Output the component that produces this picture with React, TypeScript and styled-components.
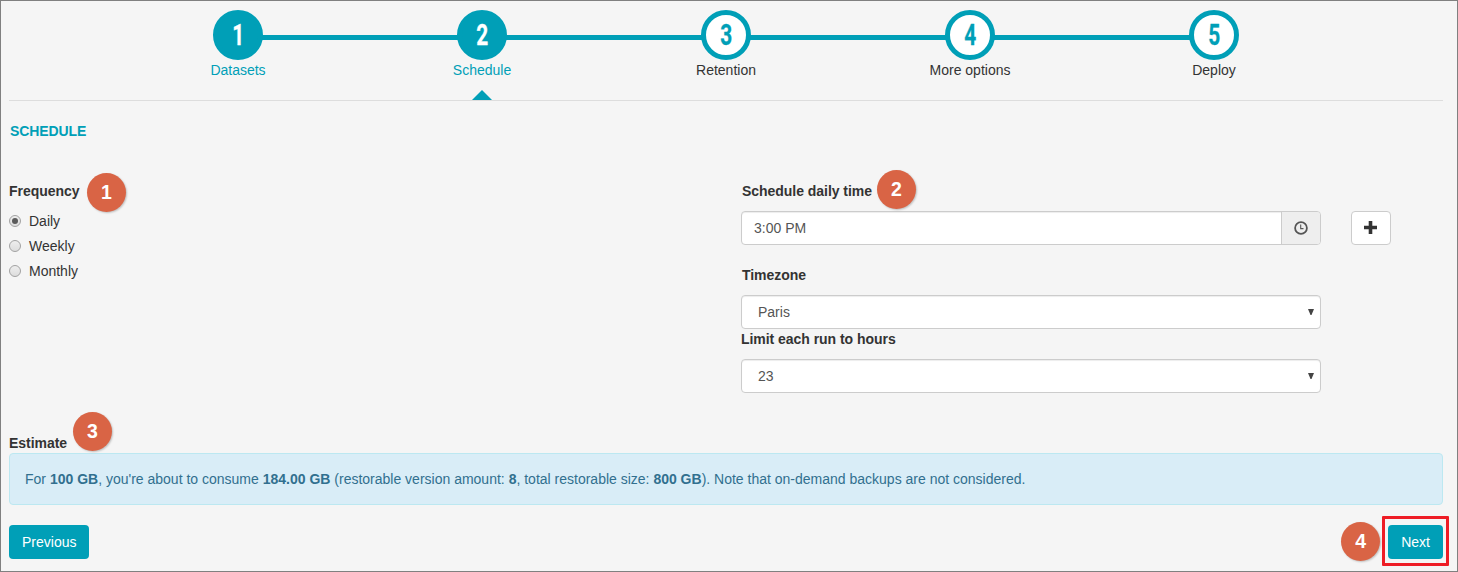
import React from 'react';
import styled, { createGlobalStyle } from 'styled-components';

const teal = '#009fb7';

const GlobalStyle = createGlobalStyle`
  *, *::before, *::after { box-sizing: border-box; }
  body {
    margin: 0;
    background: #f5f5f5;
    color: #333;
    font: 14px/20px "Liberation Sans", Arial, sans-serif;
  }
`;

const Page = styled.main`
  height: 572px;
  padding: 9px 14px 0 8px;
  border: 1px solid #808080;
  background: #f5f5f5;
  overflow: hidden;
`;

const Stepper = styled.ol`
  display: grid;
  grid-template-columns: repeat(5, 244px);
  height: 91px;
  margin: 0;
  padding: 0 0 0 107px;
  border-bottom: 1px solid #ddd;
  list-style: none;
`;

const Step = styled.li<{ $reached: boolean; $current: boolean }>`
  position: relative;
  display: flex;
  flex-direction: column;
  align-items: center;
  color: ${(p) => (p.$reached ? teal : '#333')};

  &:not(:last-child)::before {
    content: '';
    position: absolute;
    top: 25px;
    left: 50%;
    width: 100%;
    height: 5px;
    background: ${teal};
  }

  &::after {
    content: '';
    display: ${(p) => (p.$current ? 'block' : 'none')};
    margin-top: 10px;
    border: 10px solid transparent;
    border-top: 0;
    border-bottom-color: ${teal};
  }
`;

const StepCircle = styled.span<{ $reached: boolean }>`
  position: relative;
  z-index: 1;
  display: flex;
  flex: none;
  align-items: center;
  justify-content: center;
  width: 50px;
  height: 50px;
  border: 5px solid ${teal};
  border-radius: 50%;
  background: ${(p) => (p.$reached ? teal : '#fff')};
  color: ${(p) => (p.$reached ? '#fff' : teal)};
`;

const StepNumber = styled.span`
  font: bold 29px/40px Roboto, sans-serif;
  -webkit-text-stroke: 0.3px currentColor;
  transform: scaleX(0.72);
`;

const StepLabel = styled.span`
  position: relative;
  white-space: nowrap;
`;

const SectionTitle = styled.h1`
  margin: 20px 0 40px 1px;
  color: ${teal};
  font-size: 14px;
  line-height: 20px;
  letter-spacing: -0.1px;
`;

const Columns = styled.div`
  display: grid;
  grid-template-columns: 732px 650px;
  height: 252px;
`;

const Column = styled.section`
  display: flex;
  flex-direction: column;
`;

const FieldLabel = styled.div<{ $gapTop?: number; $gapBottom?: number; $indent?: number }>`
  position: relative;
  align-self: flex-start;
  margin-top: ${(p) => p.$gapTop ?? 0}px;
  margin-bottom: ${(p) => p.$gapBottom ?? 0}px;
  padding-left: ${(p) => p.$indent ?? 0}px;
  font-weight: bold;
  letter-spacing: -0.04px;
`;

const Marker = styled.span<{ $x: number; $y: number }>`
  position: absolute;
  left: ${(p) => p.$x}px;
  top: ${(p) => p.$y}px;
  width: 39px;
  height: 39px;
  border-radius: 50%;
  background: #d96445;
  box-shadow: 1px 1px 2px rgba(0, 0, 0, 0.22);
  color: #fff;
  font: bold 19.5px/38px "Liberation Sans", Arial, sans-serif;
  text-align: center;
`;

const RadioRow = styled.label`
  display: flex;
  align-items: center;
  gap: 8px;
  height: 20px;
  margin-bottom: 5px;
`;

const Radio = styled.input`
  appearance: none;
  display: grid;
  place-items: center;
  width: 12px;
  height: 12px;
  margin: 0;
  border: 1px solid #a2a2a2;
  border-radius: 50%;
  background: linear-gradient(#eee, #ddd);

  &:checked::after {
    content: '';
    width: 6px;
    height: 6px;
    border-radius: 50%;
    background: #5b5b5b;
  }
`;

const TimeRow = styled.div`
  display: flex;
  gap: 30px;
`;

const InputGroup = styled.div`
  display: flex;
  width: 580px;
  height: 34px;
  border: 1px solid #ccc;
  border-radius: 4px;
  background: #fff;
  box-shadow: inset 0 1px 1px rgba(0, 0, 0, 0.075);
  overflow: hidden;
`;

const TimeInput = styled.input`
  flex: 1;
  min-width: 0;
  padding: 0 12px;
  border: 0;
  background: transparent;
  color: #555;
  font: inherit;
`;

const Addon = styled.span`
  display: flex;
  align-items: center;
  justify-content: center;
  width: 39px;
  border-left: 1px solid #ccc;
  background: #eee;
`;

const AddButton = styled.button`
  display: flex;
  align-items: center;
  justify-content: center;
  width: 40px;
  height: 34px;
  padding: 0;
  border: 1px solid #ccc;
  border-radius: 4px;
  background: #fff;
`;

const SelectBox = styled.div`
  display: flex;
  align-items: center;
  justify-content: space-between;
  width: 580px;
  height: 34px;
  padding: 0 6px 0 16px;
  border: 1px solid #ccc;
  border-radius: 4px;
  background: #fff;
  box-shadow: inset 0 1px 1px rgba(0, 0, 0, 0.075);
  color: #555;
`;

const EstimateNote = styled.div`
  height: 52px;
  margin-bottom: 20px;
  padding: 15px;
  border: 1px solid #bce8f1;
  border-radius: 4px;
  background: #d9edf7;
  color: #31708f;
`;

const Actions = styled.footer`
  display: flex;
  justify-content: space-between;
`;

const Button = styled.button`
  height: 34px;
  padding: 0 13px;
  border: 0;
  border-radius: 4px;
  background: ${teal};
  color: #fff;
  font: inherit;
`;

const NextWrap = styled.div`
  position: relative;
  display: flex;
`;

const Highlight = styled.span`
  position: absolute;
  inset: -9px -6px -7px -6px;
  border: 3px solid #ee1c25;
  border-radius: 1px;
`;

const steps = ['Datasets', 'Schedule', 'Retention', 'More options', 'Deploy'];
const current = 1;

const Caret = () => (
  <svg width="6" height="6" viewBox="0 0 6 6">
    <path d="M0 0h6L3.5 6h-1z" fill="#444" />
  </svg>
);

const Clock = () => (
  <svg width="14" height="14" viewBox="0 0 14 14" fill="none" stroke="#555">
    <circle cx="7" cy="7" r="5.9" strokeWidth="1.8" />
    <path d="M6.7 3.6v4h2.8" strokeWidth="1.1" />
  </svg>
);

const Plus = () => (
  <svg width="14" height="14" viewBox="0 0 14 14">
    <path d="M4.7 0h3.6v4.8H13v3.4H8.3V13H4.7V8.2H0V4.8h4.7z" fill="#333" />
  </svg>
);

export default function App() {
  return (
    <Page>
      <GlobalStyle />
      <Stepper>
        {steps.map((name, i) => (
          <Step key={name} $reached={i <= current} $current={i === current}>
            <StepCircle $reached={i <= current}>
              <StepNumber>{i + 1}</StepNumber>
            </StepCircle>
            <StepLabel>{name}</StepLabel>
          </Step>
        ))}
      </Stepper>

      <SectionTitle>SCHEDULE</SectionTitle>

      <Columns>
        <Column>
          <FieldLabel $gapBottom={10}>
            Frequency
            <Marker $x={78} $y={-8}>1</Marker>
          </FieldLabel>
          {['Daily', 'Weekly', 'Monthly'].map((option) => (
            <RadioRow key={option}>
              <Radio type="radio" name="frequency" defaultChecked={option === 'Daily'} />
              {option}
            </RadioRow>
          ))}
        </Column>

        <Column>
          <FieldLabel $gapBottom={10} $indent={1}>
            Schedule daily time
            <Marker $x={136} $y={-11}>2</Marker>
          </FieldLabel>
          <TimeRow>
            <InputGroup>
              <TimeInput defaultValue="3:00 PM" aria-label="Schedule daily time" />
              <Addon><Clock /></Addon>
            </InputGroup>
            <AddButton aria-label="Add time"><Plus /></AddButton>
          </TimeRow>
          <FieldLabel $gapTop={20} $gapBottom={10} $indent={1}>Timezone</FieldLabel>
          <SelectBox>Paris<Caret /></SelectBox>
          <FieldLabel $gapBottom={10}>Limit each run to hours</FieldLabel>
          <SelectBox>23<Caret /></SelectBox>
        </Column>
      </Columns>

      <FieldLabel>
        Estimate
        <Marker $x={64} $y={-21}>3</Marker>
      </FieldLabel>
      <EstimateNote>
        For <b>100 GB</b>, you're about to consume <b>184.00 GB</b> (restorable version amount: <b>8</b>, total
        restorable size: <b>800 GB</b>). Note that on-demand backups are not considered.
      </EstimateNote>

      <Actions>
        <Button>Previous</Button>
        <NextWrap>
          <Marker $x={-47} $y={-3}>4</Marker>
          <Button>Next</Button>
          <Highlight />
        </NextWrap>
      </Actions>
    </Page>
  );
}
